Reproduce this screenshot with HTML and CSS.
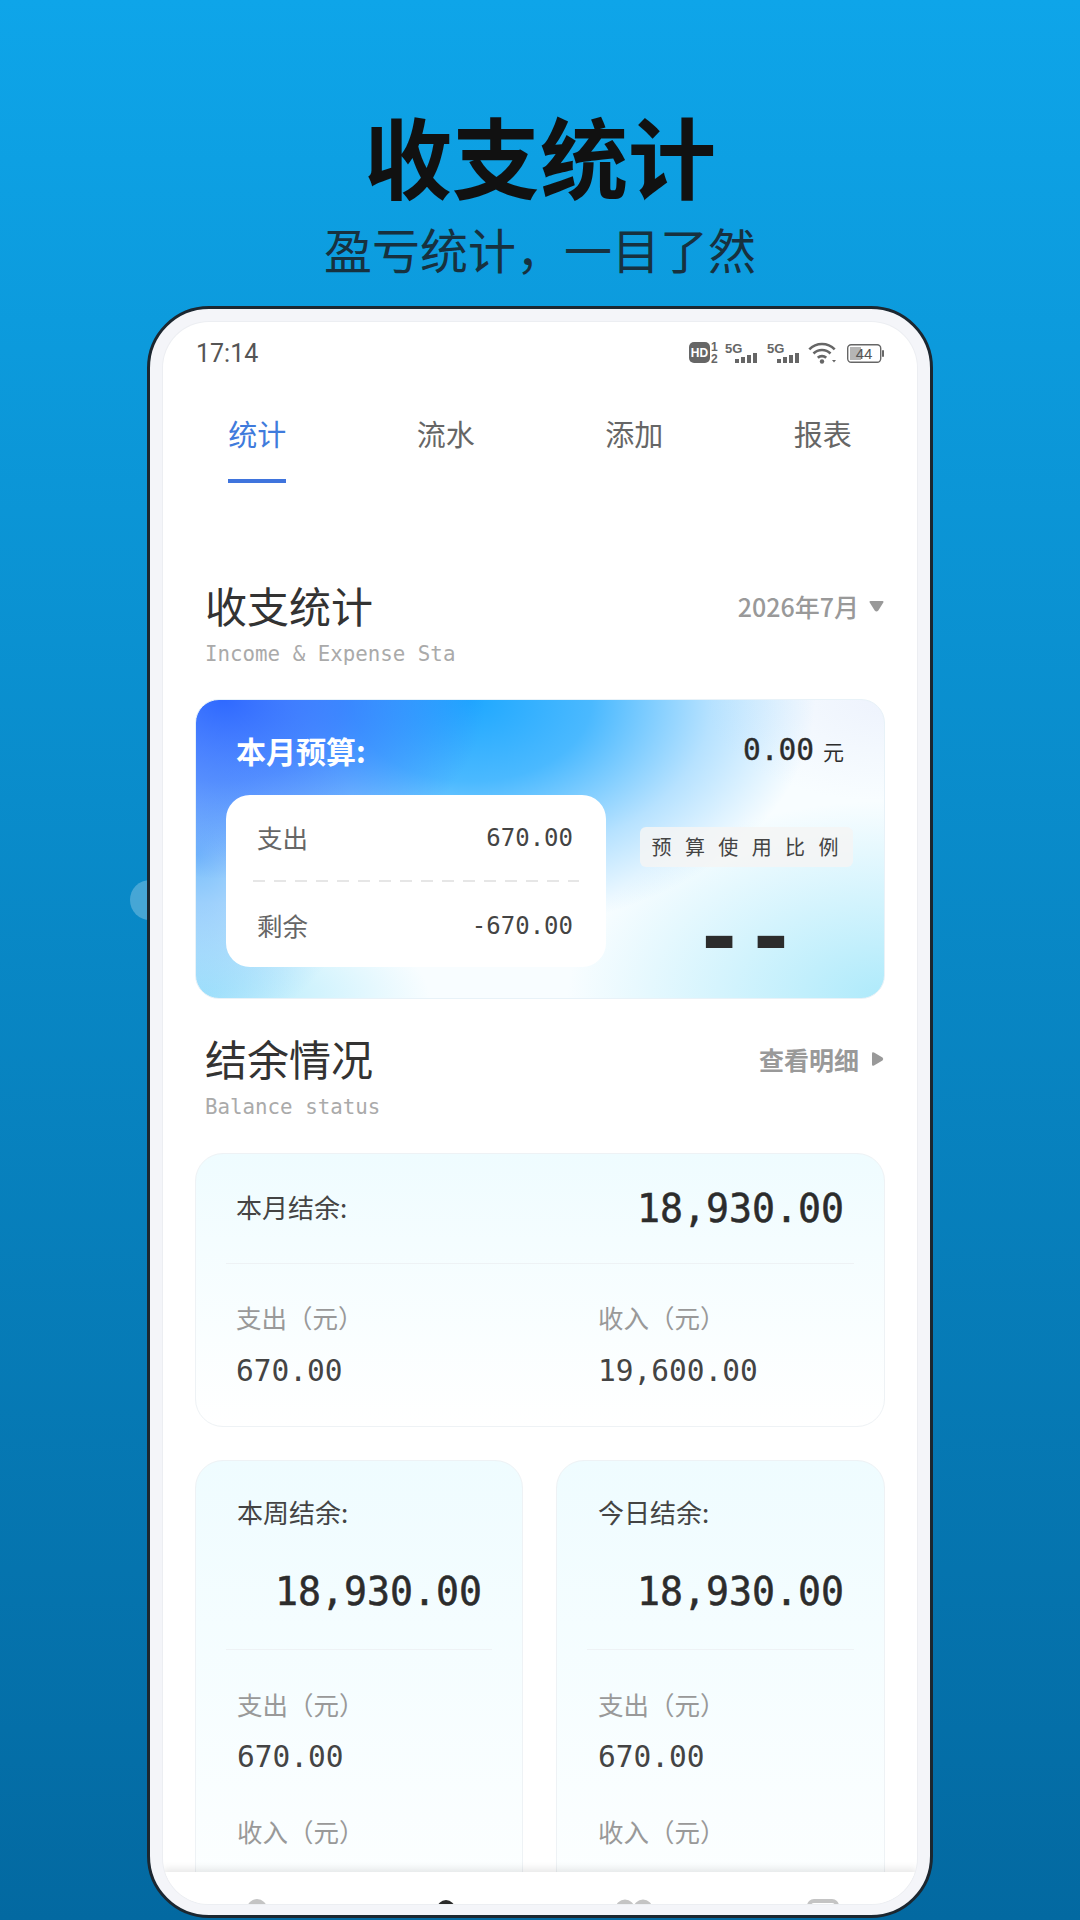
FILE: index.html
```html
<!DOCTYPE html>
<html lang="zh-CN">
<head>
    <meta charset="UTF-8">
    <meta name="viewport" content="width=device-width, initial-scale=1.0">
    <title>收支统计</title>
    <link rel="stylesheet" href="styles.css">
</head>
<body>
    <header class="promo">
        <h1>收支统计</h1>
        <p>盈亏统计，一目了然</p>
    </header>

    <div class="phone-wrap">
        <div class="side-dot"></div>
        <div class="phone">
            <div class="screen">
                <div class="status-bar">
                    <span class="time">17:14</span>
                    <svg class="status-icons" width="196" height="24" viewBox="0 0 196 24">
                        <rect x="0" y="1" width="21" height="21" rx="5" fill="#666"/>
                        <text x="10.5" y="16" class="st-hd">HD</text>
                        <text x="22" y="10" class="st-small">1</text>
                        <text x="22" y="22" class="st-small">2</text>
                        <text x="36" y="12" class="st-5g">5G</text>
                        <rect x="46" y="18" width="4" height="4" fill="#666"/>
                        <rect x="52" y="16" width="4" height="6" fill="#666"/>
                        <rect x="58" y="14" width="4" height="8" fill="#666"/>
                        <rect x="64" y="12" width="4" height="10" fill="#666"/>
                        <text x="78" y="12" class="st-5g">5G</text>
                        <rect x="88" y="18" width="4" height="4" fill="#666"/>
                        <rect x="94" y="16" width="4" height="6" fill="#666"/>
                        <rect x="100" y="14" width="4" height="8" fill="#666"/>
                        <rect x="106" y="12" width="4" height="10" fill="#666"/>
                        <path d="M120.300 8.300a18 18 0 0 1 25.400 0M124.500 12.500a12 12 0 0 1 17 0M128.800 16.800a6 6 0 0 1 8.400 0" fill="none" stroke="#666" stroke-width="2.600"/>
                        <circle cx="133" cy="20.500" r="2.200" fill="#666"/>
                        <path d="M143 19l4 0-2 2.500z" fill="#666"/>
                        <rect x="158.700" y="3.700" width="33" height="17.600" rx="3.500" fill="none" stroke="#666" stroke-width="1.400"/>
                        <rect x="161" y="6" width="11" height="13" fill="#b5b5b5"/>
                        <rect x="193" y="9" width="2" height="7" rx="1" fill="#666"/>
                        <text x="175" y="18" class="st-batt">44</text>
                    </svg>
                </div>

                <nav class="tabs">
                    <a class="tab active">统计</a>
                    <a class="tab">流水</a>
                    <a class="tab">添加</a>
                    <a class="tab">报表</a>
                </nav>

                <main class="content">
                    <div class="section-head first">
                        <div>
                            <h2>收支统计</h2>
                            <div class="en">Income &amp; Expense Sta</div>
                        </div>
                        <div class="head-link">
                            2026年7月
                            <svg width="15" height="12" viewBox="0 0 15 12"><path d="M1.500 1h12q1.500 0 .8 1.500l-5 8q-1.800 1.800-3.600 0l-5-8Q0 1 1.500 1z" fill="#999"/></svg>
                        </div>
                    </div>

                    <section class="budget">
                        <div class="budget-top">
                            <span class="budget-label">本月预算:</span>
                            <span class="budget-num">0.00<small>元</small></span>
                        </div>
                        <div class="budget-body">
                            <div class="budget-panel">
                                <div class="panel-row"><span>支出</span><b>670.00</b></div>
                                <div class="dash"></div>
                                <div class="panel-row"><span>剩余</span><b>-670.00</b></div>
                            </div>
                            <div class="ratio">
                                <div class="ratio-chip">预算使用比例</div>
                                <div class="ratio-val">--</div>
                            </div>
                        </div>
                    </section>

                    <div class="section-head">
                        <div>
                            <h2>结余情况</h2>
                            <div class="en">Balance status</div>
                        </div>
                        <div class="head-link strong">
                            查看明细
                            <svg width="13" height="16" viewBox="0 0 13 16"><path d="M1 2.500q0-2 2-1l8.500 5q1.500 1.500 0 3l-8.500 5q-2 1-2-1z" fill="#999"/></svg>
                        </div>
                    </div>

                    <section class="card wide">
                        <div class="card-top">
                            <span class="card-label">本月结余:</span>
                            <span class="card-amount">18,930.00</span>
                        </div>
                        <div class="stats">
                            <div class="stat"><span>支出（元）</span><b>670.00</b></div>
                            <div class="stat"><span>收入（元）</span><b>19,600.00</b></div>
                        </div>
                    </section>

                    <div class="card-row">
                        <section class="card small">
                            <div class="card-label">本周结余:</div>
                            <div class="card-amount">18,930.00</div>
                            <div class="line"></div>
                            <div class="stat"><span>支出（元）</span><b>670.00</b></div>
                            <div class="stat"><span>收入（元）</span></div>
                        </section>
                        <section class="card small">
                            <div class="card-label">今日结余:</div>
                            <div class="card-amount">18,930.00</div>
                            <div class="line"></div>
                            <div class="stat"><span>支出（元）</span><b>670.00</b></div>
                            <div class="stat"><span>收入（元）</span></div>
                        </section>
                    </div>
                </main>

                <footer class="tabbar">
                    <svg width="40" height="40" viewBox="0 0 40 40"><circle cx="20" cy="13" r="10" fill="#c4c4c4"/></svg>
                    <svg width="40" height="40" viewBox="0 0 40 40"><circle cx="20" cy="13" r="9" fill="#2a2a2a"/></svg>
                    <svg width="40" height="40" viewBox="0 0 40 40"><circle cx="11" cy="13" r="9.500" fill="#c4c4c4"/><circle cx="29" cy="13" r="9.500" fill="#c4c4c4"/></svg>
                    <svg width="40" height="40" viewBox="0 0 40 40"><rect x="6" y="5" width="28" height="30" rx="5" fill="none" stroke="#c4c4c4" stroke-width="4"/></svg>
                </footer>
            </div>
        </div>
    </div>
</body>
</html>
```

FILE: styles.css
```css
/* Fond de la page */
body {
    margin: 0;
    height: 1920px;
    overflow: hidden;
    font-family: "Noto Sans CJK SC", "Noto Sans", sans-serif;
    background: linear-gradient(180deg, #0ea5e9, #0369a1);
}

/* Titre promo */
.promo {
    height: 306px;
    padding-top: 102px;
    box-sizing: border-box;
    text-align: center;
}

.promo h1 {
    margin: 0;
    font-size: 88px;
    line-height: 104px;
    font-weight: 700;
    color: #111;
}

.promo p {
    margin: 10px 0 0;
    font-size: 48px;
    line-height: 64px;
    color: #17313f;
}

/* Cadre du telephone */
.phone-wrap {
    position: relative;
    width: 786px;
    margin: 0 auto;
}

.side-dot {
    position: absolute;
    left: -17px;
    top: 574px;
    width: 40px;
    height: 40px;
    border-radius: 50%;
    background: rgba(255, 255, 255, 0.25);
}

.phone {
    position: relative;
    box-sizing: border-box;
    height: 1612px;
    padding: 13px 13px 11px;
    background: #f4f5f9;
    border: 3px solid #1c2730;
    border-radius: 62px;
}

.screen {
    height: 1582px;
    display: flex;
    flex-direction: column;
    background: #fff;
    border-radius: 46px;
    overflow: hidden;
    box-shadow: 0 0 0 1px #eceef2;
}

/* Barre de statut */
.status-bar {
    flex: none;
    height: 60px;
    padding: 2px 32px 0 33px;
    box-sizing: border-box;
    display: flex;
    align-items: center;
    justify-content: space-between;
}

.time {
    font-family: Roboto, sans-serif;
    font-size: 25px;
    color: #555;
}

.st-hd {
    font: 700 12px "Liberation Sans", sans-serif;
    fill: #fff;
    text-anchor: middle;
}

.st-small {
    font: 700 12px "Liberation Sans", sans-serif;
    fill: #666;
}

.st-5g {
    font: 700 13px "Liberation Sans", sans-serif;
    fill: #666;
}

.st-batt {
    font: 400 15px "Liberation Sans", sans-serif;
    fill: #555;
    text-anchor: middle;
}

/* Onglets */
.tabs {
    flex: none;
    display: grid;
    grid-template-columns: repeat(4, 1fr);
}

.tab {
    position: relative;
    height: 101px;
    padding-top: 31px;
    box-sizing: border-box;
    text-align: center;
    font-size: 29px;
    line-height: 40px;
    color: #666;
}

.tab.active {
    color: #3f7bdc;
}

.tab.active::after {
    content: "";
    position: absolute;
    left: 50%;
    bottom: 0;
    width: 58px;
    height: 4px;
    margin-left: -29px;
    background: #3f74dd;
}

/* Contenu */
.content {
    flex: 1;
    min-height: 0;
    overflow: hidden;
}

.section-head {
    display: flex;
    justify-content: space-between;
    align-items: flex-start;
    padding: 31px 33px 0 42px;
}

.section-head.first {
    padding-top: 94px;
}

.section-head h2 {
    margin: 0;
    font-size: 42px;
    line-height: 56px;
    font-weight: 400;
    color: #333;
}

.en {
    margin-top: 7px;
    font-family: "DejaVu Sans Mono", monospace;
    font-size: 20.800px;
    line-height: 28px;
    color: #aaa;
}

.head-link {
    height: 58px;
    display: flex;
    align-items: center;
    gap: 10px;
    font-size: 25px;
    font-weight: 500;
    color: #999;
}

.head-link.strong {
    gap: 12px;
    font-weight: 700;
}

/* Carte budget */
.budget {
    box-sizing: border-box;
    height: 300px;
    margin: 31px 32px 0;
    padding-top: 30px;
    border: 1px solid #e8f2f8;
    border-radius: 24px;
    background:
        radial-gradient(ellipse 38% 60% at 4% 0%, #2f69ff 0%, rgba(47, 105, 255, 0.65) 45%, rgba(47, 105, 255, 0) 100%),
        radial-gradient(ellipse 50% 78% at 40% 0%, #1fa8ff 0%, rgba(31, 168, 255, 0.8) 35%, rgba(60, 175, 255, 0.35) 70%, rgba(60, 175, 255, 0) 100%),
        radial-gradient(ellipse 24% 60% at 0% 52%, rgba(90, 175, 250, 0.8) 0%, rgba(90, 175, 250, 0) 100%),
        radial-gradient(ellipse 34% 32% at 0% 100%, #a8e8fb 0%, rgba(168, 232, 251, 0) 100%),
        radial-gradient(ellipse 46% 66% at 100% 100%, #aeeafb 0%, rgba(174, 234, 251, 0) 100%),
        radial-gradient(ellipse 26% 34% at 100% 0%, #eef3fd 0%, rgba(238, 243, 253, 0) 100%),
        #f8fdff;
}

.budget-top {
    display: flex;
    justify-content: space-between;
    align-items: center;
    height: 40px;
    padding: 0 40px;
}

.budget-label {
    font-size: 30px;
    font-weight: 700;
    color: #fff;
}

.budget-num {
    font-family: "DejaVu Sans Mono", "Noto Sans CJK SC", monospace;
    font-size: 29.500px;
    color: #2c2c2c;
    -webkit-text-stroke: 0.4px #2c2c2c;
}

.budget-num small {
    margin-left: 9px;
    font-family: "Noto Sans CJK SC", sans-serif;
    font-size: 21px;
    -webkit-text-stroke: 0;
}

.budget-body {
    display: flex;
    margin-top: 25px;
    padding-left: 30px;
}

.budget-panel {
    flex: none;
    box-sizing: border-box;
    width: 380px;
    height: 172px;
    padding: 0 27px;
    background: #fff;
    border-radius: 24px;
}

.panel-row {
    height: 85px;
    padding: 0 6px 0 4px;
    display: flex;
    justify-content: space-between;
    align-items: center;
    font-size: 25.500px;
    color: #666;
}

.panel-row span {
    margin-bottom: 3px;
}

.panel-row b {
    font-family: "DejaVu Sans Mono", monospace;
    font-size: 24px;
    font-weight: 400;
    color: #444;
}

.dash {
    height: 2px;
    margin-bottom: 1px;
    background: repeating-linear-gradient(90deg, #e6e6e6 0 12px, transparent 12px 21px);
}

.ratio {
    flex: 1;
    padding-top: 32px;
    display: flex;
    flex-direction: column;
    align-items: center;
}

.ratio-chip {
    width: 213px;
    height: 40px;
    margin-left: 2px;
    box-sizing: border-box;
    padding-left: 12px;
    white-space: nowrap;
    font-size: 20px;
    line-height: 40px;
    letter-spacing: 13.400px;
    color: #444;
    background: rgba(244, 244, 244, 0.85);
    border-radius: 6px;
}

.ratio-val {
    margin-top: 20px;
    font-family: "DejaVu Sans Mono", monospace;
    font-size: 86px;
    line-height: 100px;
    font-weight: 700;
    color: #2c2c2c;
}

/* Cartes de solde */
.card {
    box-sizing: border-box;
    border: 1px solid #eef2f5;
    border-radius: 28px;
    background: linear-gradient(180deg, #effcff, #ffffff);
}

.wide {
    height: 274px;
    margin: 32px 32px 0;
    padding: 0 30px;
}

.card-top {
    height: 109px;
    display: flex;
    justify-content: space-between;
    align-items: center;
    padding: 0 10px;
    border-bottom: 1px solid #eef2f5;
}

.card-label {
    font-size: 26px;
    color: #444;
}

.card-top .card-label {
    margin-bottom: 4px;
}

.card-amount {
    font-family: "DejaVu Sans Mono", monospace;
    font-size: 38.200px;
    color: #2c2c2c;
    -webkit-text-stroke: 0.5px #2c2c2c;
}

.stats {
    display: grid;
    grid-template-columns: 362px 1fr;
    padding: 33px 10px 0;
}

.stat span {
    display: block;
    font-size: 25.500px;
    line-height: 40px;
    color: #999;
}

.stat b {
    display: block;
    margin-top: 14px;
    font-family: "DejaVu Sans Mono", monospace;
    font-size: 29.500px;
    line-height: 40px;
    font-weight: 400;
    color: #444;
}

.card-row {
    display: flex;
    gap: 33px;
    margin: 33px 32px 0;
}

.small {
    flex: 1;
    height: 520px;
    padding: 31px 30px 0;
}

.small:first-child {
    flex: 0 0 328px;
}

.small .card-label {
    padding-left: 11px;
    line-height: 40px;
}

.small .card-amount {
    margin-top: 35px;
    padding-right: 10px;
    line-height: 50px;
    text-align: right;
}

.line {
    height: 1px;
    margin-top: 32px;
    background: #eef2f5;
}

.small .stat {
    padding-left: 11px;
}

.small .line + .stat {
    margin-top: 34px;
}

.small .stat b {
    margin-top: 13px;
}

.small .stat + .stat {
    margin-top: 34px;
}

/* Barre du bas */
.tabbar {
    flex: none;
    position: relative;
    height: 32px;
    display: grid;
    grid-template-columns: repeat(4, 1fr);
    justify-items: center;
    overflow: hidden;
    background: #fff;
    box-shadow: 0 -3px 8px rgba(0, 0, 0, 0.1);
}

.tabbar svg {
    margin-top: 24px;
}
```
